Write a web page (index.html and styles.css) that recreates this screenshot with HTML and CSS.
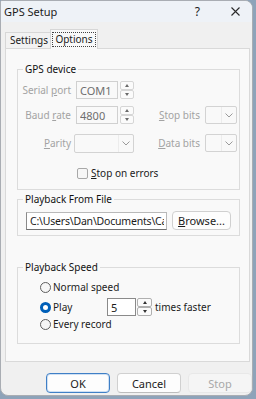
FILE: index.html
```html
<!DOCTYPE html>
<html lang="en">
<head>
    <meta charset="UTF-8">
    <meta name="viewport" content="width=device-width, initial-scale=1.0">
    <title>GPS Setup</title>
    <link rel="stylesheet" href="styles.css">
</head>
<body>
    <div class="window">
        <div class="titlebar">
            <span class="title">GPS Setup</span>
            <span class="help">?</span>
            <span class="close">
                <svg width="9" height="9" viewBox="0 0 9 9"><path d="M0.5 0.5 L8.5 8.5 M8.5 0.5 L0.5 8.5" stroke="#2b2b2b" stroke-width="1.1" fill="none"/></svg>
            </span>
        </div>

        <div class="tabs">
            <div class="tab">Settings</div>
            <div class="tab active"><span class="focus">Options</span></div>
        </div>

        <div class="panel">
            <fieldset class="group">
                <legend>GPS device</legend>
                <div class="grid">
                    <label class="lbl">Serial <u>p</u>ort</label>
                    <div class="spin">
                        <input type="text" value="COM1" disabled>
                        <span class="arrows"><span><i class="up"></i></span><span><i class="down"></i></span></span>
                    </div>
                    <div></div>
                    <div></div>

                    <label class="lbl">Baud <u>r</u>ate</label>
                    <div class="spin">
                        <input type="text" value="4800" disabled>
                        <span class="arrows"><span><i class="up"></i></span><span><i class="down"></i></span></span>
                    </div>
                    <label class="lbl"><u>S</u>top bits</label>
                    <div class="combo small"><span class="sep"></span><svg width="8" height="5" viewBox="0 0 8 5"><path d="M0.5 0.5 L4 4 L7.5 0.5" stroke="#9a9a9a" fill="none"/></svg></div>

                    <label class="lbl"><u>P</u>arity</label>
                    <div class="combo wide"><span class="sep"></span><svg width="8" height="5" viewBox="0 0 8 5"><path d="M0.5 0.5 L4 4 L7.5 0.5" stroke="#9a9a9a" fill="none"/></svg></div>
                    <label class="lbl"><u>D</u>ata bits</label>
                    <div class="combo small"><span class="sep"></span><svg width="8" height="5" viewBox="0 0 8 5"><path d="M0.5 0.5 L4 4 L7.5 0.5" stroke="#9a9a9a" fill="none"/></svg></div>

                    <div></div>
                    <label class="check"><span class="box"></span><u>S</u>top on errors</label>
                </div>
            </fieldset>

            <fieldset class="group file">
                <legend>Playback From File</legend>
                <div class="file-row">
                    <input class="path" type="text" value="C:\Users\Dan\Documents\Ca">
                    <button class="browse"><u>B</u>rowse...</button>
                </div>
            </fieldset>

            <fieldset class="group speed">
                <legend>Playback Speed</legend>
                <div class="radios">
                    <div class="radio-row"><span class="radio"></span>Normal speed</div>
                    <div class="radio-row play">
                        <span class="radio on"></span><span class="play-label">Play</span>
                        <div class="spin live">
                            <input type="text" value="5">
                            <span class="arrows"><span><i class="up"></i></span><span><i class="down"></i></span></span>
                        </div>
                        <span class="times">times faster</span>
                    </div>
                    <div class="radio-row"><span class="radio"></span>Every record</div>
                </div>
            </fieldset>
        </div>

        <div class="buttons">
            <button class="btn default">OK</button>
            <button class="btn">Cancel</button>
            <button class="btn" disabled>Stop</button>
        </div>
    </div>
</body>
</html>
```

FILE: styles.css
```css
body {
    margin: 0;
    background: #8ea3b9;
    font-family: "Noto Sans", "DejaVu Sans", sans-serif;
    font-size: 10px;
    color: #1b1b1b;
}
.window {
    width: 253px;
    height: 396px;
    box-sizing: border-box;
    background: #f0f0f0;
    border: 1px solid #a9adb3;
    border-radius: 2px 8px 8px 8px;
    overflow: hidden;
}
.titlebar {
    height: 21px;
    display: flex;
    align-items: center;
    background: #eef2f7;
    padding-left: 3px;
}
.title {
    flex: 1;
    font-size: 11px;
}
.help {
    font-size: 12px;
    margin-right: 31px;
}
.close {
    display: flex;
    margin-right: 12px;
}
.tabs {
    height: 26px;
    display: flex;
    align-items: flex-end;
    margin-left: 4px;
}
.tab {
    box-sizing: border-box;
    width: 46px;
    height: 16px;
    border: 1px solid #d7d7d7;
    border-bottom: none;
    background: #f2f2f2;
    text-align: center;
    line-height: 15px;
    padding-left: 2px;
}
.tab.active {
    position: relative;
    z-index: 1;
    width: 48px;
    height: 20px;
    margin-left: -1px;
    margin-bottom: -1px;
    background: #f9f9f9;
    padding-top: 2px;
    padding-left: 0;
}
.focus {
    display: inline-block;
    border: 1px dotted #444;
    padding: 0 2px;
    line-height: 13px;
}
.panel {
    margin-left: 4px;
    width: 245px;
    height: 314px;
    box-sizing: border-box;
    border: 1px solid #d9d9d9;
    background: #f9f9f9;
    padding-top: 13px;
}
.group {
    margin: 0 0 0 11px;
    width: 223px;
    min-width: 0;
    box-sizing: border-box;
    border: 1px solid #dcdcdc;
    padding: 4px 0 0 0;
}
.group legend {
    margin-left: 5px;
    padding: 0 2px;
    line-height: 15px;
    color: #111;
}
.grid {
    display: grid;
    grid-template-columns: 53px 58px 61px 32px;
    grid-template-rows: 25px 28px 33px 12px;
    column-gap: 5px;
    align-items: start;
    padding-bottom: 10px;
}
.lbl {
    text-align: right;
    line-height: 18px;
    color: #a3a3a3;
}
.spin {
    display: flex;
    height: 18px;
}
.spin input {
    width: 42px;
    box-sizing: border-box;
    border: 1px solid #d0d0d0;
    background: #f9f9f9;
    color: #6e6e6e;
    font: inherit;
    font-size: 11px;
    padding: 0 3px;
    margin: 0;
}
.arrows {
    display: flex;
    flex-direction: column;
    width: 14px;
    margin-left: 2px;
}
.arrows span {
    flex: 1;
    border: 1px solid #d6d6d6;
    border-radius: 2px;
    background: #fbfbfb;
    display: flex;
    align-items: center;
    justify-content: center;
}
.arrows i {
    width: 0;
    height: 0;
    border-left: 2.5px solid transparent;
    border-right: 2.5px solid transparent;
}
.arrows .up {
    border-bottom: 3px solid #6a6a6a;
}
.arrows .down {
    border-top: 3px solid #6a6a6a;
}
.combo {
    box-sizing: border-box;
    height: 18px;
    border: 1px solid #d3d3d3;
    border-radius: 2px;
    background: #f9f9f9;
    display: flex;
    align-items: center;
    justify-content: flex-end;
}
.combo .sep {
    align-self: stretch;
    width: 1px;
    background: #ececec;
    margin-right: 3px;
}
.combo svg {
    margin-right: 3px;
}
.combo.wide {
    width: 60px;
    height: 19px;
    margin-left: -2px;
}
.check {
    grid-column: 2 / 5;
    display: flex;
    align-items: center;
    height: 12px;
    margin-left: 1px;
}
.box {
    width: 11px;
    height: 11px;
    box-sizing: border-box;
    border: 1px solid #a8a8a8;
    border-radius: 2px;
    background: #f7f7f7;
    margin-right: 3px;
}
.file {
    margin-top: 2px;
}
.file-row {
    display: flex;
    align-items: center;
    gap: 5px;
    padding: 0 0 5px 8px;
}
.path {
    width: 141px;
    height: 18px;
    box-sizing: border-box;
    border: 1px solid #b9b9b9;
    border-left-color: #8a8a8a;
    border-bottom-color: #6f6f6f;
    background: #fff;
    font: inherit;
    font-size: 10.5px;
    letter-spacing: -0.2px;
    color: #1b1b1b;
    padding: 0 2px 0 3px;
    margin: 0;
}
.browse {
    width: 59px;
    height: 19px;
    box-sizing: border-box;
    border: 1px solid #d0d0d0;
    border-radius: 4px;
    background: #fdfdfd;
    font: inherit;
    font-size: 11px;
    color: #1b1b1b;
    padding: 0;
}
.speed {
    margin-top: 24px;
}
.radios {
    padding: 0 0 11px 22px;
}
.radio-row {
    display: flex;
    align-items: center;
    height: 16px;
}
.radio-row.play {
    height: 18px;
    margin-top: 3px;
}
.radio {
    width: 11px;
    height: 11px;
    box-sizing: border-box;
    border: 1px solid #5e5e5e;
    border-radius: 50%;
    background: #f6f6f6;
    margin-right: 2px;
}
.radio.on {
    border: 3.5px solid #005fb8;
    background: #fff;
}
.play-label {
    width: 54px;
}
.spin.live input {
    width: 29px;
    border-color: #8a8a8a;
    background: #fff;
    color: #1b1b1b;
}
.spin.live .arrows {
    width: 15px;
    margin-left: 1px;
}
.spin.live .arrows span {
    border-color: #b0b0b0;
}
.spin.live .arrows .up {
    border-bottom-color: #333;
}
.spin.live .arrows .down {
    border-top-color: #333;
}
.times {
    margin-left: 3px;
}
.buttons {
    display: flex;
    justify-content: flex-end;
    gap: 7px;
    margin-top: 11px;
}
.btn {
    width: 64px;
    height: 20px;
    box-sizing: border-box;
    border: 1px solid #d0d0d0;
    border-bottom-color: #bdbdbd;
    border-radius: 4px;
    background: #fdfdfd;
    font: inherit;
    font-size: 11px;
    color: #1b1b1b;
    padding: 0;
}
.btn.default {
    border-color: #3f7fc6;
    box-shadow: inset 0 0 0 1px #cfe0f3;
}
.btn:disabled {
    background: #f5f5f5;
    border-color: #e8e8e8;
    color: #a8a8a8;
}
```
